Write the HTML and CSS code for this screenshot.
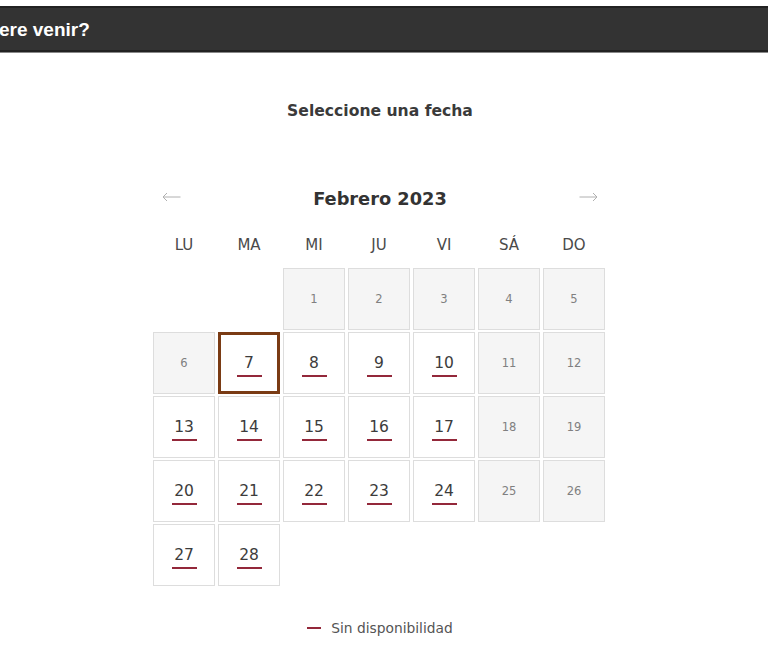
FILE: index.html
```html
<!DOCTYPE html>
<html lang="es">
<head>
<meta charset="utf-8">
<link rel="stylesheet" href="styles.css">
</head>
<body>
<div class="bar"><span class="bar-title">ere venir?</span></div>
<main class="main">
  <div class="cal">
    <h2 class="heading">Seleccione una fecha</h2>
    <div class="month">
      <svg class="arrow" width="19" height="10" viewBox="0 0 19 10"><path d="M18.5 5H1M5 1L1 5L5 9" fill="none" stroke="#b0b0b0" stroke-width="1"/></svg>
      <span class="month-title">Febrero 2023</span>
      <svg class="arrow" width="19" height="10" viewBox="0 0 19 10"><path d="M0.5 5H18M14 1L18 5L14 9" fill="none" stroke="#b0b0b0" stroke-width="1"/></svg>
    </div>
    <div class="weekdays">
      <span>LU</span><span>MA</span><span>MI</span><span>JU</span><span>VI</span><span>SÁ</span><span>DO</span>
    </div>
    <div class="grid">
      <div class="empty"></div>
      <div class="empty"></div>
      <div class="day off">1</div>
      <div class="day off">2</div>
      <div class="day off">3</div>
      <div class="day off">4</div>
      <div class="day off">5</div>
      <div class="day off">6</div>
      <div class="day on selected"><span class="num">7</span></div>
      <div class="day on"><span class="num">8</span></div>
      <div class="day on"><span class="num">9</span></div>
      <div class="day on"><span class="num">10</span></div>
      <div class="day off">11</div>
      <div class="day off">12</div>
      <div class="day on"><span class="num">13</span></div>
      <div class="day on"><span class="num">14</span></div>
      <div class="day on"><span class="num">15</span></div>
      <div class="day on"><span class="num">16</span></div>
      <div class="day on"><span class="num">17</span></div>
      <div class="day off">18</div>
      <div class="day off">19</div>
      <div class="day on"><span class="num">20</span></div>
      <div class="day on"><span class="num">21</span></div>
      <div class="day on"><span class="num">22</span></div>
      <div class="day on"><span class="num">23</span></div>
      <div class="day on"><span class="num">24</span></div>
      <div class="day off">25</div>
      <div class="day off">26</div>
      <div class="day on"><span class="num">27</span></div>
      <div class="day on"><span class="num">28</span></div>
    </div>
    <div class="legend"><span class="dash"></span><span>Sin disponibilidad</span></div>
  </div>
</main>
</body>
</html>
```
FILE: styles.css
```css
* { box-sizing: border-box; }
html, body { margin: 0; padding: 0; background: #fff; }
body { font-family: "DejaVu Sans", Verdana, sans-serif; color: #333; }

.bar {
  margin-top: 6px;
  height: 46px;
  background: #333;
  border-top: 2px solid #222;
  border-bottom: 2px solid #222;
  box-shadow: 0 1px 0 #888;
  display: flex;
  align-items: center;
  padding-top: 2px;
}
.bar-title {
  font-family: "Liberation Sans", Arial, sans-serif;
  font-weight: bold;
  font-size: 19px;
  color: #fff;
  margin-left: -1px;
}

.main { padding-left: 153px; }
.cal { width: 452px; display: flex; flex-direction: column; }

.heading {
  margin: 49px 0 0;
  font-size: 15.6px;
  line-height: 20px;
  font-weight: bold;
  text-align: center;
  color: #3a3a3a;
  padding-left: 2px;
}

.month {
  margin-top: 62px;
  height: 30px;
  display: flex;
  align-items: center;
  justify-content: space-between;
  padding: 0 7px 0 9px;
}
.arrow { display: block; margin-top: -3px; }
.month-title { font-size: 17.8px; font-weight: bold; color: #333; }

.weekdays {
  margin-top: 16px;
  height: 30px;
  display: grid;
  grid-template-columns: repeat(7, 62px);
  column-gap: 3px;
  align-items: center;
  font-size: 15px;
  color: #4a4a4a;
  text-align: center;
  padding-top: 2px;
}

.grid {
  margin-top: 9px;
  display: grid;
  grid-template-columns: repeat(7, 62px);
  grid-auto-rows: 62px;
  column-gap: 3px;
  row-gap: 2px;
}
.day {
  border: 1px solid #ddd;
  display: flex;
  align-items: center;
  justify-content: center;
}
.off { background: #f5f5f5; color: #808080; font-size: 11.5px; }
.on { background: #fff; }
.num {
  font-size: 15.5px;
  color: #3c3c3c;
  padding-bottom: 3px;
  border-bottom: 2px solid #93283a;
  width: 25px;
  text-align: center;
  line-height: 18px;
  margin-top: 4px;
}
.selected { border: 3px solid #7a3b14; }

.legend {
  margin-top: 34px;
  display: flex;
  justify-content: center;
  align-items: center;
  gap: 10px;
  font-size: 13.8px;
  color: #555;
  padding-left: 2px;
}
.dash { width: 14px; height: 2px; background: #93283a; }
```
